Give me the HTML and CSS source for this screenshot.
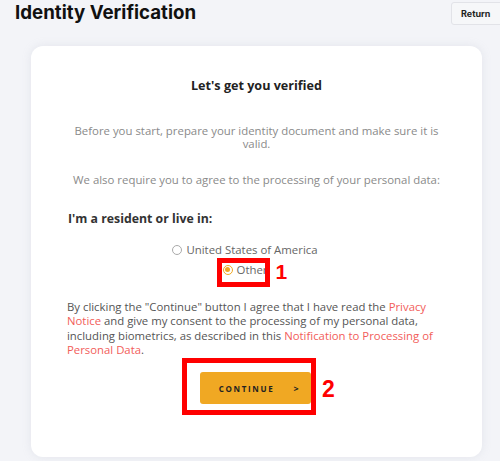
FILE: index.html
```html
<!DOCTYPE html>
<html>
<head>
<meta charset="utf-8">
<link rel="stylesheet" href="styles.css">
</head>
<body>
<div class="page">
  <header class="top">
    <h1 class="title">Identity Verification</h1>
    <button class="return">Return</button>
  </header>
  <main class="card">
    <h2 class="heading">Let's get you verified</h2>
    <p class="note">Before you start, prepare your identity document and make sure it is valid.</p>
    <p class="note note-2">We also require you to agree to the processing of your personal data:</p>
    <h3 class="resident">I'm a resident or live in:</h3>
    <div class="options">
      <label class="opt"><span class="radio"></span>United States of America</label>
      <label class="opt"><span class="radio checked"></span>Other<span class="mark mark-1"></span><span class="num num-1">1</span></label>
    </div>
    <p class="consent">By clicking the "Continue" button I agree that I have read the <a class="link">Privacy Notice</a> and give my consent to the processing of my personal data, including biometrics, as described in this <a class="link">Notification to Processing of Personal Data</a>.</p>
    <div class="actions">
      <button class="continue"><span>CONTINUE</span><span class="arrow">&gt;</span><span class="mark mark-2"></span><span class="num num-2">2</span></button>
    </div>
  </main>
</div>
</body>
</html>
```

FILE: styles.css
```css
* { box-sizing: border-box; }
html, body { margin: 0; padding: 0; }
body {
  background: #f3f4f8;
  font-family: "Open Sans", sans-serif;
  width: 500px;
  height: 461px;
  overflow: hidden;
}
.page { position: relative; }
.top {
  display: flex;
  justify-content: space-between;
  align-items: flex-start;
  height: 46px;
}
.title {
  margin: 1px 0 0 15px;
  font-family: "Inter", sans-serif;
  font-weight: 700;
  font-size: 18.7px;
  line-height: 24px;
  color: #111;
}
.return {
  margin: 2px -4px 0 0;
  width: 53px;
  height: 23px;
  border: 1px solid #e2e3e8;
  border-radius: 3px;
  background: #f6f7f9;
  font-family: "Inter", sans-serif;
  font-weight: 700;
  font-size: 9px;
  color: #222;
  text-align: left;
  padding: 0 0 0 9px;
}
.card {
  margin-left: 31px;
  width: 451px;
  height: 411px;
  background: #fff;
  border-radius: 12px;
  box-shadow: 0 0 10px rgba(160, 165, 185, 0.18);
  padding: 32px 36px 0 36px;
  text-align: center;
  font-family: "Open Sans", sans-serif;
}
.heading {
  margin: 0;
  font-size: 12.6px;
  font-weight: 700;
  line-height: 16px;
  color: #222;
}
.note {
  margin: 30px 0 0;
  font-size: 11.4px;
  line-height: 13px;
  color: #8a8a8a;
}
.note-2 { margin-top: 23px; }
.resident {
  margin: 25px 0 0 1px;
  text-align: left;
  font-size: 12.3px;
  font-weight: 700;
  color: #333;
  line-height: 16px;
}
.options {
  margin-top: 15px;
  padding-right: 23px;
  display: flex;
  flex-direction: column;
  align-items: center;
  gap: 5px;
}
.opt {
  display: inline-flex;
  align-items: center;
  gap: 4px;
  font-size: 11.4px;
  line-height: 15px;
  color: #666;
  position: relative;
}
.radio {
  width: 10px;
  height: 10px;
  border-radius: 50%;
  border: 1px solid #aaa;
  display: inline-block;
  position: relative;
}
.radio.checked { border-color: #f0a823; }
.radio.checked::after {
  content: "";
  position: absolute;
  left: 1.5px;
  top: 1.5px;
  width: 5px;
  height: 5px;
  border-radius: 50%;
  background: #f0a823;
}
.mark {
  position: absolute;
  border: 5px solid #f00;
}
.mark-1 { left: -6px; top: -4.5px; width: 53px; height: 29px; }
.num {
  position: absolute;
  color: #f00;
  font-family: "Liberation Sans", sans-serif;
  font-weight: 700;
  letter-spacing: 0;
}
.num-1 { left: 53px; top: -1.5px; font-size: 21px; line-height: 21px; }
.consent {
  margin: 23px 0 0;
  padding-right: 9px;
  text-align: left;
  font-size: 11.35px;
  line-height: 14.4px;
  color: #555;
}
.link { color: #f25d5a; }
.actions {
  display: flex;
  justify-content: center;
  margin-top: 14.6px;
  padding-right: 2px;
}
.continue {
  position: relative;
  width: 111px;
  height: 32px;
  border: 0;
  border-radius: 3px;
  background: #f0a823;
  font-family: "Open Sans", sans-serif;
  font-weight: 700;
  font-size: 8px;
  letter-spacing: 1.7px;
  color: #222;
  display: flex;
  align-items: center;
  justify-content: center;
  gap: 19px;
  padding: 0 0 0 8px;
}
.arrow { font-size: 9px; }
.mark-2 { left: -18px; top: -14px; width: 134px; height: 57px; }
.num-2 { left: 122px; top: 6px; font-size: 23px; line-height: 23px; }
```
